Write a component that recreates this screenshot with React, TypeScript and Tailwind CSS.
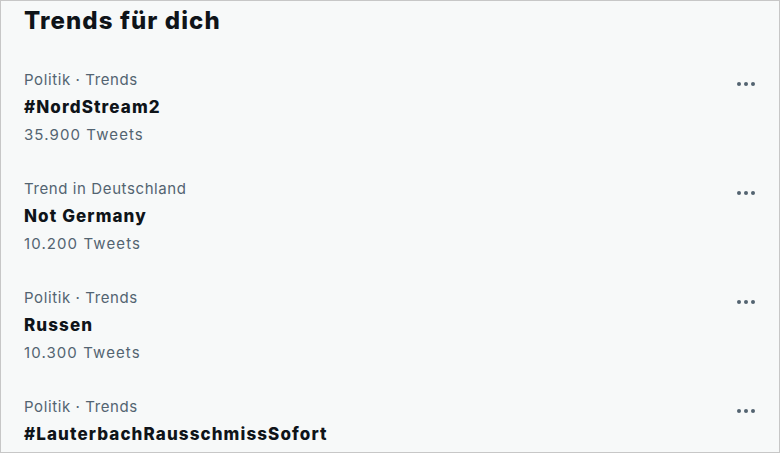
const trends = [
  { category: 'Politik · Trends', name: '#NordStream2', tweets: '35.900 Tweets' },
  { category: 'Trend in Deutschland', name: 'Not Germany', tweets: '10.200 Tweets' },
  { category: 'Politik · Trends', name: 'Russen', tweets: '10.300 Tweets' },
  { category: 'Politik · Trends', name: '#LauterbachRausschmissSofort', tweets: '' },
];

function Dots() {
  return (
    <svg width="20" height="6" viewBox="0 0 20 6" className="fill-[#536471]">
      <circle cx="3" cy="3" r="2" />
      <circle cx="10" cy="3" r="2" />
      <circle cx="17" cy="3" r="2" />
    </svg>
  );
}

export default function App() {
  return (
    <div
      className="w-[780px] h-[453px] overflow-hidden bg-[#f7f9f9] border border-[#c7c7c7] text-[#0f1419]"
      style={{ fontFamily: 'Inter, "Liberation Sans", Arial, sans-serif' }}
    >
      <div className="h-[52px] px-[23px] pt-[5px]">
        <h2 className="text-[24px] leading-[30px] font-extrabold tracking-[1.1px]">Trends für dich</h2>
      </div>
      {trends.map((t, i) => (
        <div key={i} className="flex justify-between pl-[23px] pr-[23px] py-[13px] h-[109px]">
          <div className="flex flex-col">
            <span className="text-[15px] leading-[27px] text-[#536471] tracking-[0.6px]">{t.category}</span>
            <span className="text-[17px] leading-[28px] font-extrabold tracking-[1.1px]">{t.name}</span>
            {t.tweets && (
              <span className="text-[15px] leading-[28px] text-[#536471] tracking-[1.1px]">{t.tweets}</span>
            )}
          </div>
          <div className="pt-[15px]">
            <Dots />
          </div>
        </div>
      ))}
    </div>
  );
}
